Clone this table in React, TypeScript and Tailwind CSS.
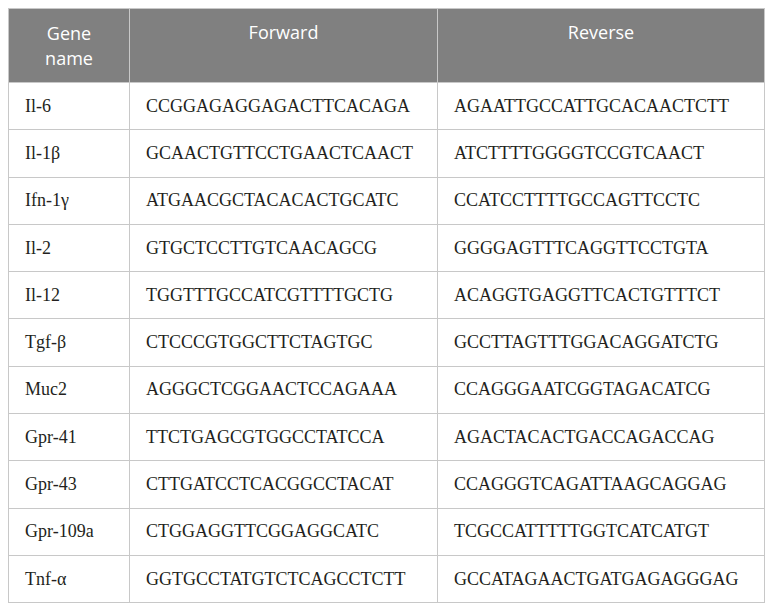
const rows: [string, string, string][] = [
  ['Il-6', 'CCGGAGAGGAGACTTCACAGA', 'AGAATTGCCATTGCACAACTCTT'],
  ['Il-1β', 'GCAACTGTTCCTGAACTCAACT', 'ATCTTTTGGGGTCCGTCAACT'],
  ['Ifn-1γ', 'ATGAACGCTACACACTGCATC', 'CCATCCTTTTGCCAGTTCCTC'],
  ['Il-2', 'GTGCTCCTTGTCAACAGCG', 'GGGGAGTTTCAGGTTCCTGTA'],
  ['Il-12', 'TGGTTTGCCATCGTTTTGCTG', 'ACAGGTGAGGTTCACTGTTTCT'],
  ['Tgf-β', 'CTCCCGTGGCTTCTAGTGC', 'GCCTTAGTTTGGACAGGATCTG'],
  ['Muc2', 'AGGGCTCGGAACTCCAGAAA', 'CCAGGGAATCGGTAGACATCG'],
  ['Gpr-41', 'TTCTGAGCGTGGCCTATCCA', 'AGACTACACTGACCAGACCAG'],
  ['Gpr-43', 'CTTGATCCTCACGGCCTACAT', 'CCAGGGTCAGATTAAGCAGGAG'],
  ['Gpr-109a', 'CTGGAGGTTCGGAGGCATC', 'TCGCCATTTTTGGTCATCATGT'],
  ['Tnf-α', 'GGTGCCTATGTCTCAGCCTCTT', 'GCCATAGAACTGATGAGAGGGAG'],
]

export default function App() {
  return (
    <div className="w-[772px] h-[612px] bg-white pt-2 pl-2">
      <table className="table-fixed border-collapse w-[756px]">
        <colgroup>
          <col className="w-[121px]" />
          <col className="w-[308px]" />
          <col className="w-[327px]" />
        </colgroup>
        <thead>
          <tr className="h-[74px] bg-[#808080] text-white font-['Open_Sans',sans-serif] text-[18px] leading-[25px]">
            <th className="border border-[#c8c8c8] font-normal px-5 align-middle">Gene name</th>
            <th className="border border-[#c8c8c8] font-normal align-top pt-[11px]">Forward</th>
            <th className="border border-[#c8c8c8] font-normal align-top pt-[11px]">Reverse</th>
          </tr>
        </thead>
        <tbody className="font-['Liberation_Serif',serif] text-[18px] text-[#231f20]">
          {rows.map(([gene, fwd, rev]) => (
            <tr key={gene} className="h-[47.3px]">
              <td className="border border-[#c8c8c8] pl-4">{gene}</td>
              <td className="border border-[#c8c8c8] pl-4">{fwd}</td>
              <td className="border border-[#c8c8c8] pl-4">{rev}</td>
            </tr>
          ))}
        </tbody>
      </table>
    </div>
  )
}
